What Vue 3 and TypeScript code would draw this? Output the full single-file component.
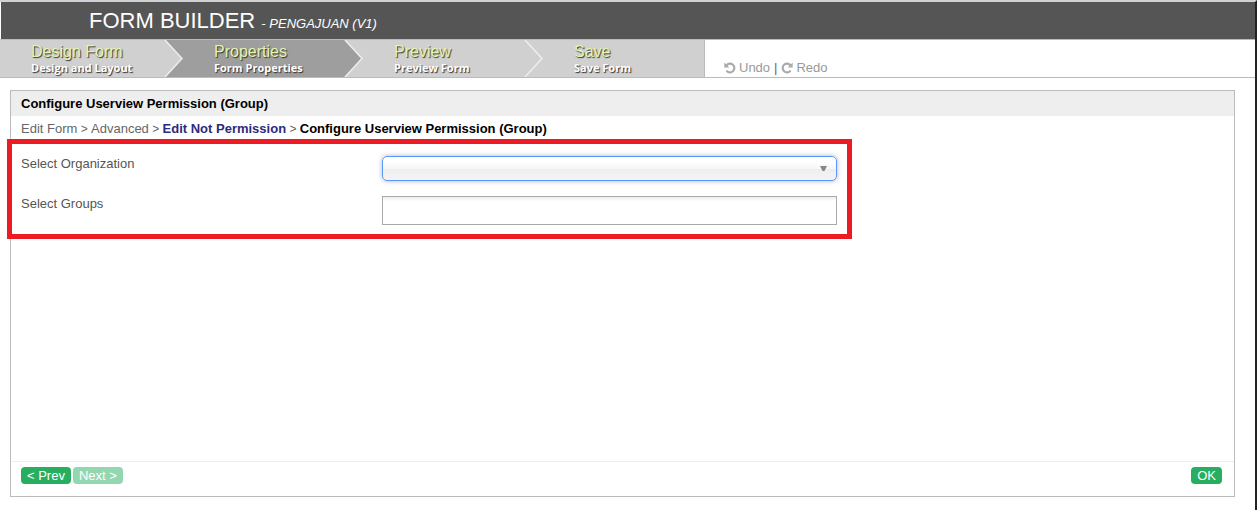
<script setup lang="ts">
import { ref } from 'vue'

interface Step {
  title: string
  note: string
  active: boolean
}

const steps: Step[] = [
  { title: 'Design Form', note: 'Design and Layout', active: false },
  { title: 'Properties', note: 'Form Properties', active: true },
  { title: 'Preview', note: 'Preview Form', active: false },
  { title: 'Save', note: 'Save Form', active: false },
]

const organization = ref('')
const groups = ref('')
</script>

<template>
  <div class="page">
    <header class="header">
      <h1>FORM BUILDER <em>- PENGAJUAN (V1)</em></h1>
    </header>

    <nav class="toolbar" aria-label="Builder steps">
      <ol class="steps">
        <li v-for="(step, i) in steps" :key="step.title" class="step" :class="{ active: step.active }">
          <a href="#" :aria-current="step.active ? 'step' : undefined">
            <span class="step-title">{{ step.title }}</span>
            <span class="step-note">{{ step.note }}</span>
          </a>
          <svg v-if="i < steps.length - 1" class="chevron" viewBox="0 0 20 37" aria-hidden="true">
            <rect width="20" height="37" :fill="steps[i + 1].active ? '#9e9e9e' : '#d0d0d0'" />
            <path d="M0 0H2L19 18.500L2 37H0Z" :fill="step.active ? '#9e9e9e' : '#d0d0d0'" />
            <path d="M2 0L19 18.500L2 37" fill="none" stroke="#eeeeee" stroke-width="1.500" />
          </svg>
        </li>
      </ol>
      <div class="history">
        <button type="button">
          <svg viewBox="0 0 12 12" aria-hidden="true">
            <path d="M2.400 3.400A4.400 4.400 0 1 1 2.400 8.600" fill="none" stroke="#aaa" stroke-width="2.200" />
            <path d="M0.300 0.500V5.500H5.300Z" fill="#aaa" />
          </svg>
          Undo
        </button>
        <span class="bar">|</span>
        <button type="button">
          <svg viewBox="0 0 12 12" aria-hidden="true">
            <path d="M9.600 3.400A4.400 4.400 0 1 0 9.600 8.600" fill="none" stroke="#aaa" stroke-width="2.200" />
            <path d="M11.700 0.500V5.500H6.700Z" fill="#aaa" />
          </svg>
          Redo
        </button>
      </div>
    </nav>

    <main class="panel">
      <h2>Configure Userview Permission (Group)</h2>
      <div class="crumbs">
        <a href="#">Edit Form</a> &gt; <a href="#">Advanced</a> &gt;
        <a href="#" class="parent">Edit Not Permission</a> &gt;
        <strong>Configure Userview Permission (Group)</strong>
      </div>

      <form class="fields" @submit.prevent>
        <div class="field">
          <label for="organization">Select Organization</label>
          <div class="select">
            <select id="organization" v-model="organization">
              <option value=""></option>
            </select>
            <svg viewBox="0 0 7 6" aria-hidden="true"><path d="M0 0H7L4.500 5H2.500Z" fill="#888" /></svg>
          </div>
        </div>
        <div class="field">
          <label for="groups">Select Groups</label>
          <input id="groups" v-model="groups" type="text" />
        </div>
      </form>

      <footer class="actions">
        <button type="button">&lt; Prev</button>
        <button type="button" disabled>Next &gt;</button>
        <button type="button" class="ok">OK</button>
      </footer>
    </main>
  </div>
</template>

<style>
body {
  background: #fff;
}
</style>

<style scoped>
.page {
  box-sizing: border-box;
  display: flex;
  flex-direction: column;
  min-height: 100vh;
  border-top: 2px solid #cfd1d4;
  border-right: 2px solid #222;
  font-family: "Liberation Sans", Arial, sans-serif;
  font-size: 13px;
  line-height: 16px;
  color: #555;
}

.page * {
  box-sizing: border-box;
}

button {
  font: inherit;
  border: 0;
  cursor: pointer;
}

a {
  color: inherit;
  text-decoration: none;
}

.header {
  margin-left: 1px;
  padding-left: 88px;
  background: #555;
  color: #fff;
}

.header h1 {
  margin: 0;
  font-size: 22px;
  font-weight: 400;
  line-height: 37px;
}

.header em {
  font-size: 13px;
  line-height: 16px;
}

.toolbar {
  display: flex;
  height: 39px;
  border-top: 1px solid #bbb;
  border-bottom: 1px solid #bbb;
}

.steps {
  display: flex;
  margin: 0;
  padding: 0;
  list-style: none;
  background: #d0d0d0;
  border-right: 1px solid #bbb;
}

.step {
  display: flex;
  justify-content: space-between;
  width: 180px;
  background: #d0d0d0;
}

.step:first-child {
  width: 183px;
}

.step:last-child {
  width: 161px;
}

.step.active {
  background: #9e9e9e;
}

.step a {
  padding: 3px 0 0 31px;
  white-space: nowrap;
  text-shadow: 1px 1px 1px #333;
}

.step-title,
.step-note {
  display: block;
}

.step-title {
  font-size: 16px;
  line-height: 17px;
  color: #e5f5ae;
}

.step-note {
  font-family: "Open Sans", "DejaVu Sans", sans-serif;
  font-size: 11px;
  font-weight: 700;
  line-height: 15px;
  color: #fff;
}

.chevron {
  flex: none;
  width: 20px;
  height: 37px;
}

.history {
  display: flex;
  align-items: center;
  gap: 4px;
  padding: 18px 0 0 19px;
  color: #aaa;
}

.history button {
  display: flex;
  align-items: center;
  gap: 3px;
  padding: 0;
  background: none;
  color: #999;
}

.history svg {
  width: 12px;
  height: 12px;
}

.bar {
  color: #666;
}

.panel {
  display: flex;
  flex: 1;
  flex-direction: column;
  margin: 12px 20px 13px 10px;
  border: 1px solid #bbb;
}

.panel h2 {
  margin: 0;
  padding: 0 10px;
  background: #eee;
  color: #000;
  font-size: 13px;
  line-height: 25px;
}

.crumbs {
  padding: 5px 10px 2px;
  font-size: 12px;
  color: #666;
}

.crumbs a,
.crumbs strong {
  font-size: 13px;
}

.crumbs .parent {
  color: #2d2a80;
  font-weight: 700;
}

.crumbs strong {
  color: #000;
}

.fields {
  display: grid;
  gap: 15px;
  width: 69.1%;
  margin-left: -4px;
  padding: 12px 10px 9px 9px;
  border: 5px solid #ed1c24;
}

.field {
  display: grid;
  grid-template-columns: 361fr 455fr;
  align-items: start;
}

.select {
  position: relative;
}

.select select {
  display: block;
  width: 100%;
  height: 25px;
  padding: 0 24px 0 8px;
  appearance: none;
  border: 1px solid #5897fb;
  border-radius: 5px;
  background: linear-gradient(#fff 20%, #f6f6f6 50%, #eee 52%, #f4f4f4 100%);
  box-shadow: 0 0 5px rgba(0, 0, 0, 0.3);
  font: inherit;
}

.select svg {
  position: absolute;
  top: 10px;
  right: 10px;
  width: 7px;
  height: 6px;
  pointer-events: none;
}

.field input {
  width: 100%;
  height: 29px;
  padding: 0 5px;
  border: 1px solid #aaa;
  background: linear-gradient(#eee 1%, #fff 15%);
  font: inherit;
}

.actions {
  display: flex;
  gap: 2px;
  margin-top: auto;
  padding: 5px 12px 12px 10px;
  border-top: 1px solid #eee;
}

.actions button {
  height: 17px;
  padding: 0 6px;
  border-radius: 4px;
  background: #27ae60;
  color: #fff;
  line-height: 17px;
}

.actions button:disabled {
  background: #93d7b0;
}

.actions .ok {
  margin-left: auto;
}
</style>
